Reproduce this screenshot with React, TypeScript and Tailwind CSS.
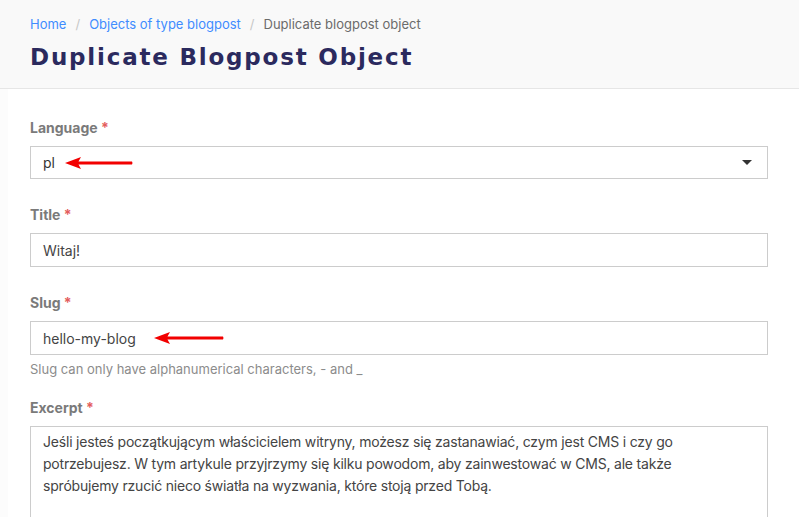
import React from 'react';

const FONT = { fontFamily: 'Inter, "Noto Sans", sans-serif' };

function Arrow({ width }: { width: number }) {
  return (
    <svg width={width} height="14" viewBox={`0 0 ${width} 14`} className="shrink-0">
      <path d={`M0 7 L16 1 L13.5 5.5 L${width - 1} 5.5 Q${width} 7 ${width - 1} 8.5 L13.5 8.5 L16 13 Z`} fill="#f20000" />
    </svg>
  );
}

function Label({ children }: { children: React.ReactNode }) {
  return (
    <div className="text-[14px] font-bold text-[#7a7a7a] leading-5 mb-[8px]">
      {children} <span className="text-[#e35d5d]">*</span>
    </div>
  );
}

export default function App() {
  return (
    <div className="w-[799px] h-[517px] overflow-hidden bg-white flex flex-col" style={FONT}>
      {/* Header */}
      <header className="h-[89px] shrink-0 bg-[#f9f9f9] border-b border-[#e6e6e6] px-[30px] pt-[16px]">
        <nav className="flex items-center text-[13px] leading-4 text-[#6b6b6b]">
          <a href="#" className="text-[#3f8cff]">Home</a>
          <span className="mx-[9px] text-[#c7c7c7]">/</span>
          <a href="#" className="text-[#3f8cff]">Objects of type blogpost</a>
          <span className="mx-[9px] text-[#c7c7c7]">/</span>
          <span>Duplicate blogpost object</span>
        </nav>
        <h1
          className="mt-[11px] text-[23px] leading-7 font-bold text-[#2b2a5e] tracking-[1.8px]"
          style={{ fontFamily: '"DejaVu Sans", sans-serif' }}
        >
          Duplicate Blogpost Object
        </h1>
      </header>

      <div className="flex flex-1 min-h-0">
        <div className="w-[8px] shrink-0 bg-[#fcfcfc]"></div>
        <main className="flex-1 pl-[22px] pr-[31px] pt-[29px] flex flex-col">
          {/* Language */}
          <Label>Language</Label>
          <div className="h-[33px] border border-[#cccccc] flex items-center pl-[12px] pr-[15px] text-[14px] text-[#333]">
            <span>pl</span>
            <span className="ml-[10px]"><Arrow width={68} /></span>
            <span className="ml-auto w-0 h-0 border-l-[5px] border-r-[5px] border-t-[5px] border-l-transparent border-r-transparent border-t-[#333]"></span>
          </div>

          {/* Title */}
          <div className="mt-[26px]">
            <Label>Title</Label>
            <div className="h-[34px] border border-[#cccccc] flex items-center px-[12px] text-[14px] text-[#444]">
              Witaj!
            </div>
          </div>

          {/* Slug */}
          <div className="mt-[26px]">
            <Label>Slug</Label>
            <div className="h-[34px] border border-[#cccccc] flex items-center px-[12px] text-[14px] text-[#444]">
              <span>hello-my-blog</span>
              <span className="ml-[18px]"><Arrow width={70} /></span>
            </div>
            <div className="mt-[6px] text-[13px] leading-4 text-[#8c8c8c]">
              Slug can only have alphanumerical characters, - and _
            </div>
          </div>

          {/* Excerpt */}
          <div className="mt-[21px] flex flex-col flex-1">
            <Label>Excerpt</Label>
            <div className="flex-1 border border-[#cccccc] border-b-0 px-[12px] pt-[4px] text-[14px] leading-[22px] text-[#444] tracking-[-0.2px]">
              Jeśli jesteś początkującym właścicielem witryny, możesz się zastanawiać, czym jest CMS i czy go
              <br />
              potrzebujesz. W tym artykule przyjrzymy się kilku powodom, aby zainwestować w CMS, ale także
              <br />
              spróbujemy rzucić nieco światła na wyzwania, które stoją przed Tobą.
            </div>
          </div>
        </main>
      </div>
    </div>
  );
}
